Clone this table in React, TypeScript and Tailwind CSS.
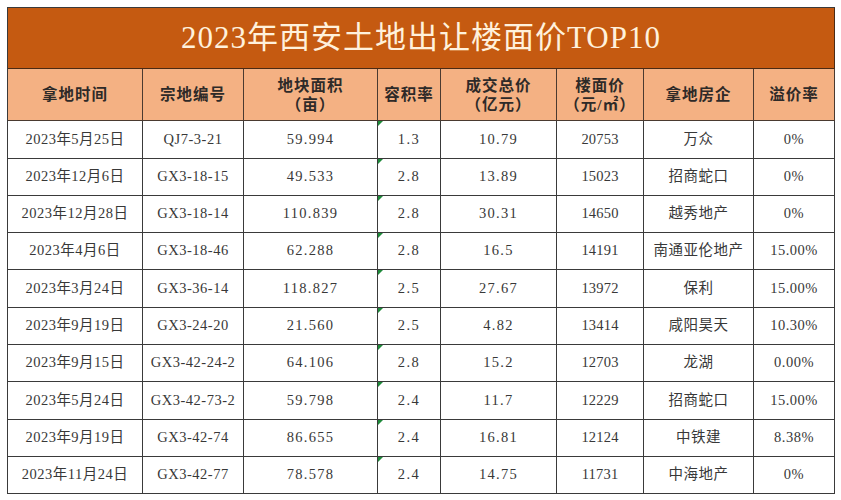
import React from "react";

const rows: string[][] = [
  ["2023年5月25日", "QJ7-3-21", "59.994", "1.3", "10.79", "20753", "万众", "0%"],
  ["2023年12月6日", "GX3-18-15", "49.533", "2.8", "13.89", "15023", "招商蛇口", "0%"],
  ["2023年12月28日", "GX3-18-14", "110.839", "2.8", "30.31", "14650", "越秀地产", "0%"],
  ["2023年4月6日", "GX3-18-46", "62.288", "2.8", "16.5", "14191", "南通亚伦地产", "15.00%"],
  ["2023年3月24日", "GX3-36-14", "118.827", "2.5", "27.67", "13972", "保利", "15.00%"],
  ["2023年9月19日", "GX3-24-20", "21.560", "2.5", "4.82", "13414", "咸阳昊天", "10.30%"],
  ["2023年9月15日", "GX3-42-24-2", "64.106", "2.8", "15.2", "12703", "龙湖", "0.00%"],
  ["2023年5月24日", "GX3-42-73-2", "59.798", "2.4", "11.7", "12229", "招商蛇口", "15.00%"],
  ["2023年9月19日", "GX3-42-74", "86.655", "2.4", "16.81", "12124", "中铁建", "8.38%"],
  ["2023年11月24日", "GX3-42-77", "78.578", "2.4", "14.75", "11731", "中海地产", "0%"],
];

const rowHeights = ["h-[38px]", "h-[37px]", "h-[37px]", "h-[37px]", "h-[38px]", "h-[37px]", "h-[37px]", "h-[38px]", "h-[37px]", "h-[37px]"];

const headers: React.ReactNode[] = [
  "拿地时间",
  "宗地编号",
  <>地块面积<br />（亩）</>,
  "容积率",
  <>成交总价<br />（亿元）</>,
  <>楼面价<br />（元/㎡）</>,
  "拿地房企",
  "溢价率",
];

const cellText = [
  "text-[14.5px] tracking-[0.5px]",
  "text-[14.5px] tracking-[0.5px]",
  "text-[14.5px] tracking-[1.3px]",
  "text-[14.5px] tracking-[1.5px]",
  "text-[14.5px] tracking-[1.3px]",
  "text-[14.5px] tracking-[0.2px]",
  "text-[14.5px] tracking-[0.5px]",
  "text-[14.5px] tracking-[0.5px]",
];

const font = { fontFamily: '"Liberation Serif", "Noto Sans CJK SC", serif' };

export default function App() {
  return (
    <div className="w-[841px] h-[500px] bg-white pl-[7px] pt-[7px]" style={font}>
      <div className="w-[828px] border-l border-t border-[#3a3a3a]">
        <div className="h-[61px] bg-[#c55a11] border-r border-b border-[#4a2a14] flex items-center justify-center text-[31px] text-[#fff1dc] tracking-[1px]">
          2023年西安土地出让楼面价TOP10
        </div>
        <div className="grid grid-cols-[135px_101px_134px_63px_116px_87px_110px_81px]">
          {headers.map((h, i) => (
            <div
              key={i}
              className="h-[52px] bg-[#f4b183] border-r border-b border-[#4a3a30] flex items-center justify-center text-center text-[15.5px] leading-[19px] font-bold text-[#2e2a28] tracking-[1px]"
            >
              <div>{h}</div>
            </div>
          ))}
          {rows.map((r, ri) =>
            r.map((c, ci) => (
              <div
                key={ri + "-" + ci}
                className={`${rowHeights[ri]} ${cellText[ci]} relative border-r border-b border-[#3a3a3a] flex items-center justify-center text-[#383838]`}
              >
                {ci === 3 && (
                  <span className="absolute left-0 top-0 w-0 h-0 border-t-[5px] border-r-[5px] border-t-[#1e8a3a] border-r-transparent" />
                )}
                {c}
              </div>
            ))
          )}
        </div>
      </div>
    </div>
  );
}
